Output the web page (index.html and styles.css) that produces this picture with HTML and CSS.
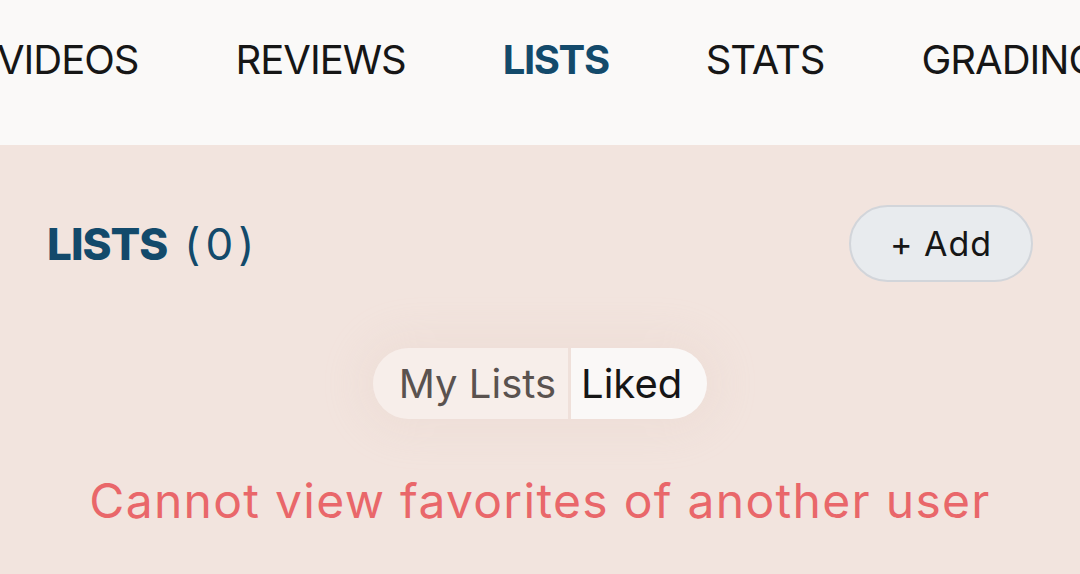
FILE: index.html
```html
<!DOCTYPE html>
<html lang="en">
<head>
<meta charset="utf-8">
<title>Lists</title>
<link rel="stylesheet" href="styles.css">
</head>
<body>
<nav class="tabbar">
  <div class="tabs">
    <span class="tab">VIDEOS</span>
    <span class="tab">REVIEWS</span>
    <span class="tab active">LISTS</span>
    <span class="tab">STATS</span>
    <span class="tab">GRADING</span>
  </div>
</nav>
<main class="content">
  <div class="head-row">
    <h2 class="title"><span class="title-strong">LISTS</span><span class="count">(0)</span></h2>
    <button class="add-btn">+ Add</button>
  </div>
  <div class="toggle-wrap">
    <div class="toggle">
      <span class="seg seg-left">My Lists</span>
      <span class="seg seg-right">Liked</span>
    </div>
  </div>
  <p class="error">Cannot view favorites of another user</p>
</main>
</body>
</html>
```

FILE: styles.css
```css
html, body {
  margin: 0;
  padding: 0;
}
body {
  background: #f2e4de;
  font-family: Inter, "Noto Sans", sans-serif;
  width: 1080px;
  height: 574px;
  overflow: hidden;
}
.tabbar {
  background: #faf9f8;
  height: 145px;
  overflow: hidden;
}
.tabs {
  display: flex;
  gap: 97px;
  white-space: nowrap;
  padding-top: 38px;
  margin-left: -3px;
}
.tab {
  font-size: 40px;
  color: #161616;
  line-height: 44px;
  letter-spacing: -1px;
}
.tab.active {
  color: #134a6b;
  font-weight: 700;
  letter-spacing: -1.4px;
}
.content {
  padding: 0 47px;
}
.head-row {
  display: flex;
  justify-content: space-between;
  align-items: center;
  padding-top: 60px;
}
.title {
  margin: 0;
  font-size: 44px;
  font-weight: 400;
  color: #134a6b;
  line-height: 60px;
}
.title-strong {
  font-weight: 800;
  letter-spacing: -1px;
}
.count {
  margin-left: 17px;
  letter-spacing: 5px;
}
.add-btn {
  width: 184px;
  height: 77px;
  border-radius: 40px;
  border: 2px solid #d2d5da;
  background: #e8ebee;
  font-family: inherit;
  font-size: 34px;
  letter-spacing: 1px;
  color: #161616;
  padding: 0;
}
.toggle-wrap {
  display: flex;
  justify-content: center;
  padding-top: 66px;
}
.toggle {
  display: flex;
  height: 71px;
  border-radius: 36px;
  overflow: hidden;
  box-shadow: 0 0 40px 12px rgba(225, 200, 190, 0.2);
}
.seg {
  display: flex;
  align-items: center;
  font-size: 40px;
}
.seg-left {
  background: #f7eeea;
  color: #5a524f;
  padding: 0 12px 0 26px;
  border-right: 3px solid #efe0da;
}
.seg-right {
  background: #faf8f7;
  color: #161616;
  padding: 0 25px 0 10px;
}
.error {
  margin: 52px 0 0;
  text-align: center;
  color: #e9676a;
  font-size: 48px;
  letter-spacing: 1.3px;
  line-height: 60px;
}
```
